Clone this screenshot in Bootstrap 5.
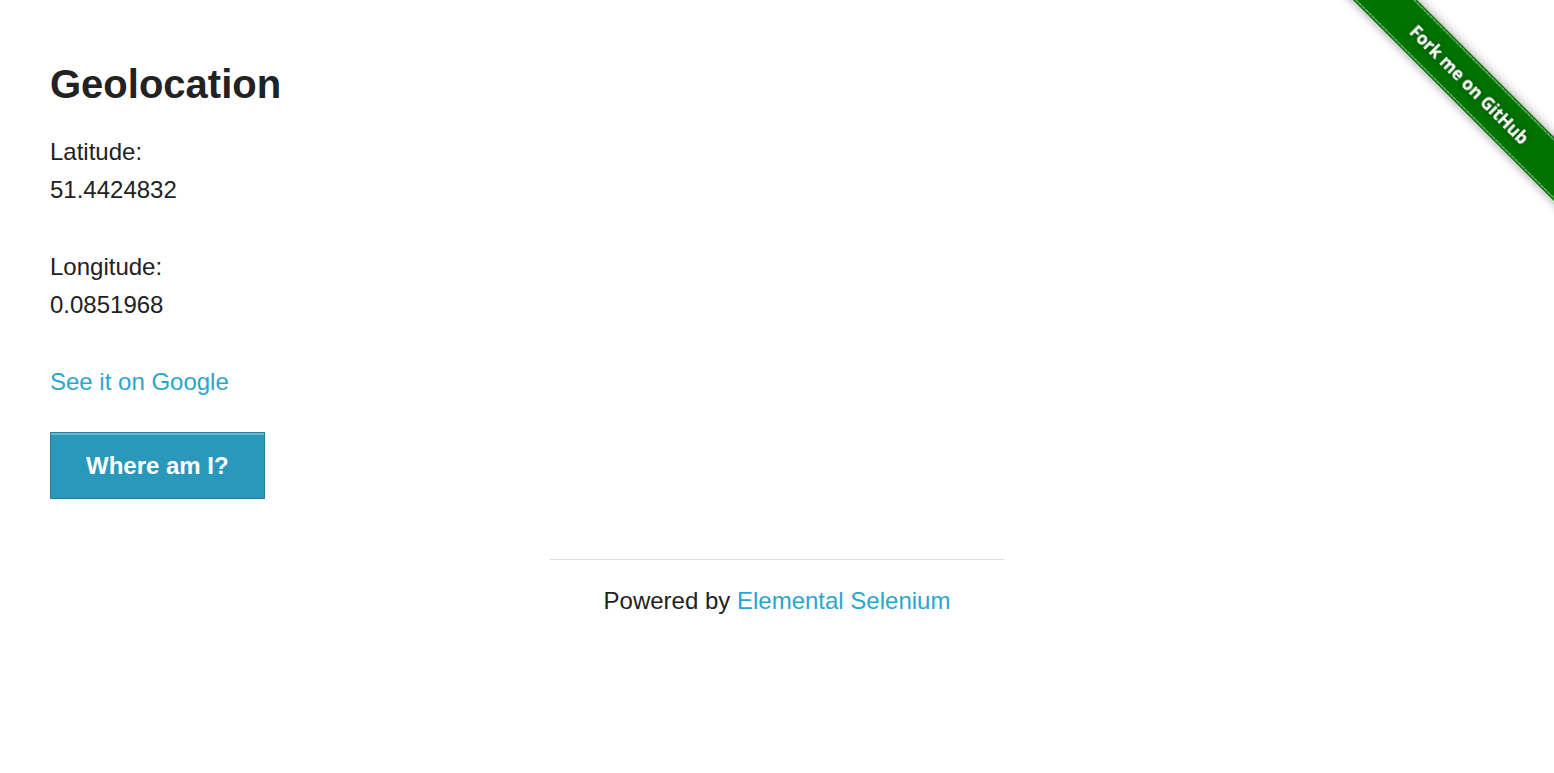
<!DOCTYPE html>
<html lang="en">
<head>
<meta charset="utf-8">
<meta name="viewport" content="width=device-width, initial-scale=1">
<title>Geolocation</title>
<link href="https://cdn.jsdelivr.net/npm/bootstrap@5.3.0/dist/css/bootstrap.min.css" rel="stylesheet">
<style>
body { font-family: "Liberation Sans", Arial, sans-serif; font-size: 24px; line-height: 38px; color: #222; background: #fff; }
a { color: #2ba6cb; text-decoration: none; }
.page { padding: 56px 50px 0; }
.page h3 { font-size: 40px; line-height: 56px; font-weight: 700; margin-bottom: 21px; }
.reading { margin-bottom: 39px; }
.map-link { margin-bottom: 31px; }
.btn-locate {
  --bs-btn-color: #fff; --bs-btn-bg: #2998bb; --bs-btn-border-color: #24829f;
  --bs-btn-hover-color: #fff; --bs-btn-hover-bg: #2284a1; --bs-btn-hover-border-color: #24829f;
  --bs-btn-font-size: 24px; --bs-btn-font-weight: 700; --bs-btn-line-height: 27px;
  --bs-btn-padding-x: 35px; --bs-btn-padding-y: 19px; --bs-btn-border-radius: 0;
  box-shadow: inset 0 2px 0 #69b7cf;
}
.footer-col { padding: 0 15px; margin-top: 60px; }
.footer-col hr { margin: 0 0 22px; border-top: 1px solid #ddd; opacity: 1; }
.ribbon text { font-family: "Open Sans", sans-serif; font-size: 17px; font-weight: 700; }
</style>
</head>
<body>
<a class="ribbon position-absolute top-0 end-0 lh-1" href="https://github.com/tourdedave/the-internet" aria-label="Fork me on GitHub">
  <svg class="d-block" width="224" height="224" viewBox="0 0 224 224">
    <defs>
      <filter id="band-shadow" x="-20%" y="-20%" width="140%" height="140%"><feGaussianBlur stdDeviation="6"/></filter>
      <filter id="text-shadow" x="-20%" y="-50%" width="140%" height="200%"><feDropShadow dx="0" dy="0" stdDeviation="2" flood-color="#000" flood-opacity=".6"/></filter>
    </defs>
    <path d="M4-20 244 220V158L66-20Z" fill="#000" opacity=".45" filter="url(#band-shadow)"/>
    <path d="M3-20 244 221V157L67-20Z" fill="#007200"/>
    <path d="M6-20 244 218M64-20 244 160" fill="none" stroke="#6cb26c" stroke-width="1.4" stroke-dasharray="4 .6"/>
    <text transform="translate(139 85) rotate(45)" text-anchor="middle" y="6" fill="#fff" filter="url(#text-shadow)">Fork me on GitHub</text>
  </svg>
</a>
<main class="container-fluid page">
  <h3>Geolocation</h3>
  <div class="reading">Latitude:<div>51.4424832</div></div>
  <div class="reading">Longitude:<div>0.0851968</div></div>
  <div class="map-link"><a href="https://maps.google.com/?q=51.4424832,0.0851968">See it on Google</a></div>
  <button type="button" class="btn btn-locate d-block">Where am I?</button>
  <footer class="row mx-0 justify-content-center">
    <div class="col-4 footer-col text-center">
      <hr>
      <div class="text-nowrap">Powered by <a href="http://elementalselenium.com/">Elemental Selenium</a></div>
    </div>
  </footer>
</main>
<script src="https://cdn.jsdelivr.net/npm/bootstrap@5.3.0/dist/js/bootstrap.bundle.min.js"></script>
</body>
</html>
